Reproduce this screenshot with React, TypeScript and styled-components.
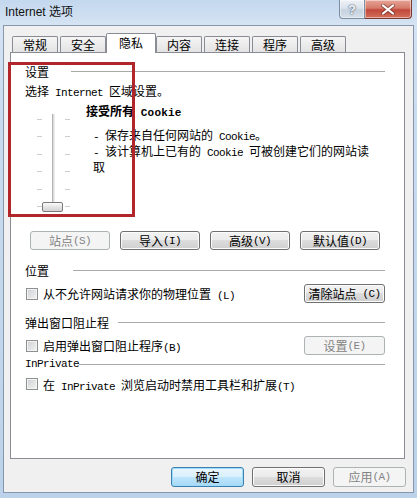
import styled, { createGlobalStyle } from "styled-components";

const GlobalStyle = createGlobalStyle`
  html, body {
    margin: 0;
    padding: 0;
  }
  body {
    font-family: "Noto Sans CJK SC", "Noto Sans", sans-serif;
    font-size: 12px;
    color: #000;
  }
`;

const Window = styled.div`
  width: 417px;
  height: 498px;
  box-sizing: border-box;
  display: flex;
  flex-direction: column;
  overflow: hidden;
  background: linear-gradient(to bottom, #c3d7ee 0, #d5e3f3 24px, #c9dbef 120px, #bcd2ea 100%);
`;

const TitleBar = styled.div`
  height: 25px;
  display: flex;
  justify-content: space-between;
  align-items: flex-start;
  flex-shrink: 0;
`;

const Title = styled.div`
  padding-left: 5px;
  line-height: 25px;
  font-family: "Liberation Sans", "Noto Sans CJK SC", sans-serif;
  font-size: 12px;
  color: #111;
`;

const CaptionButtons = styled.div`
  display: flex;
  margin-right: 5px;
`;

const CaptionButton = styled.div<{ $close?: boolean }>`
  box-sizing: border-box;
  width: ${({ $close }) => ($close ? 47 : 26)}px;
  height: 19px;
  display: flex;
  align-items: center;
  justify-content: center;
  border: 1px solid ${({ $close }) => ($close ? "#7a3a32" : "#7d8ea3")};
  border-top: none;
  border-left: ${({ $close }) => ($close ? "none" : "1px solid #7d8ea3")};
  border-radius: ${({ $close }) => ($close ? "0 0 4px 0" : "0 0 0 4px")};
  background: ${({ $close }) =>
    $close
      ? "linear-gradient(to bottom, #e6a597 0%, #d57a6a 45%, #c2473a 55%, #d2705c 100%)"
      : "linear-gradient(to bottom, #eef2f7 0%, #dbe3ec 45%, #c6d2df 55%, #d6e0ea 100%)"};
  box-shadow: inset 0 0 0 1px rgba(255, 255, 255, 0.45);
`;

const HelpGlyph = styled.span`
  font-family: "Liberation Sans", sans-serif;
  font-weight: bold;
  color: #f4f7fb;
  text-shadow: 0 0 2px #45566c, 0 0 1px #45566c;
  font-size: 13px;
`;

const Client = styled.div`
  flex: 1;
  margin: 0 3px 5px;
  border: 1px solid #8596ad;
  background: #f0f0f0;
  padding: 7px 8px 0 6px;
  display: flex;
  flex-direction: column;
`;

const TabRow = styled.div`
  display: flex;
  align-items: flex-end;
  height: 19px;
  padding-left: 2px;
  gap: 2px;
  position: relative;
  z-index: 1;
`;

const Tab = styled.div<{ $active?: boolean }>`
  box-sizing: border-box;
  width: ${({ $active }) => ($active ? 50 : 46)}px;
  height: ${({ $active }) => ($active ? 20 : 16)}px;
  margin: ${({ $active }) => ($active ? "0 -2px -1px" : "0")};
  border: 1px solid #898c95;
  border-bottom: none;
  border-radius: 2px 2px 0 0;
  background: ${({ $active }) => ($active ? "#fff" : "linear-gradient(to bottom, #f5f5f5, #e3e3e3)")};
  display: flex;
  align-items: center;
  justify-content: center;
  padding-top: ${({ $active }) => ($active ? 0 : 1)}px;
  padding-bottom: ${({ $active }) => ($active ? 2 : 0)}px;
  line-height: 14px;
`;

const Panel = styled.div`
  box-sizing: border-box;
  height: 407px;
  border: 1px solid #898c95;
  background: #fff;
  padding: 10px 19px 0 14px;
  display: flex;
  flex-direction: column;
  position: relative;
`;

const Annotation = styled.div`
  position: absolute;
  left: -3px;
  top: 9px;
  width: 127px;
  height: 155px;
  box-sizing: border-box;
  border: 3px solid #b0262a;
  pointer-events: none;
`;

const Latin = styled.span<{ $bold?: boolean }>`
  font-family: "Liberation Mono", monospace;
  font-size: 11px;
  letter-spacing: ${({ $bold }) => ($bold ? "0.2px" : "-0.6px")};
  font-weight: ${({ $bold }) => ($bold ? "bold" : "normal")};
  white-space: pre;
`;

const SectionHeader = styled.div<{ $top: number }>`
  display: flex;
  align-items: center;
  height: 16px;
  margin-top: ${({ $top }) => $top}px;
`;

const Rule = styled.div<{ $gap: number }>`
  flex: 1;
  height: 1px;
  background: #a9a9a9;
  margin-left: ${({ $gap }) => $gap}px;
`;

const TextLine = styled.div<{ $top?: number }>`
  line-height: 16px;
  margin-top: ${({ $top }) => $top ?? 0}px;
  white-space: nowrap;
`;

const SettingsBody = styled.div`
  display: flex;
  margin-top: 2px;
  height: 111px;
`;

const Slider = styled.div`
  position: relative;
  margin: 11px 0 0 12px;
  width: 33px;
  height: 98px;
  display: flex;
  justify-content: space-between;
`;

const TickColumn = styled.div`
  width: 5px;
  display: flex;
  flex-direction: column;
  justify-content: space-between;
  padding: 5px 0;
`;

const Tick = styled.div`
  height: 1px;
  background: #cdcdcd;
`;

const Track = styled.div`
  box-sizing: border-box;
  width: 3px;
  height: 100%;
  border-left: 1px solid #b4b4b4;
  border-right: 1px solid #ededed;
  background: #dcdcdc;
`;

const Thumb = styled.div`
  position: absolute;
  left: 5px;
  top: 88px;
  width: 21px;
  height: 10px;
  box-sizing: border-box;
  border: 1px solid #7a7a7a;
  border-radius: 2px;
  background: linear-gradient(to bottom, #fbfbfb, #e4e4e4 50%, #d2d2d2);
`;

const Description = styled.div`
  margin-left: 16px;
  display: flex;
  flex-direction: column;
`;

const DescTitle = styled.div`
  font-weight: bold;
  line-height: 16px;
  white-space: nowrap;
`;

const DescLines = styled.div`
  margin-top: 7px;
  padding-left: 7px;
  line-height: 13px;
  white-space: nowrap;
`;

const ButtonRow = styled.div`
  display: flex;
  gap: 10px;
  margin: 17px 0 0 5px;
`;

const Button = styled.button<{ $w: number; $h?: number; $primary?: boolean }>`
  box-sizing: border-box;
  width: ${({ $w }) => $w}px;
  height: ${({ $h }) => $h ?? 19}px;
  padding: 0;
  font-family: "Noto Sans CJK SC", sans-serif;
  font-size: 12px;
  line-height: 14px;
  color: #000;
  border: 1px solid ${({ $primary }) => ($primary ? "#3c7fb1" : "#707070")};
  border-radius: 3px;
  background: ${({ $primary }) =>
    $primary
      ? "linear-gradient(to bottom, #eaf6fd 0%, #d9f0fc 49%, #bee6fd 50%, #a7d9f5 100%)"
      : "linear-gradient(to bottom, #f2f2f2 0%, #ebebeb 49%, #dddddd 50%, #cfcfcf 100%)"};
  box-shadow: inset 0 0 0 1px ${({ $primary }) => ($primary ? "#9edcfa" : "#fcfcfc")};
  display: flex;
  align-items: center;
  justify-content: center;

  &:disabled {
    border-color: #adb2b5;
    background: #f4f4f4;
    box-shadow: none;
    color: #838383;
  }
`;

const OptionRow = styled.div<{ $top: number; $h: number }>`
  display: flex;
  align-items: center;
  justify-content: space-between;
  height: ${({ $h }) => $h}px;
  margin-top: ${({ $top }) => $top}px;
`;

const CheckLabel = styled.label`
  display: flex;
  align-items: center;
  gap: 5px;
  margin-left: 1px;
  white-space: nowrap;
`;

const CheckBox = styled.span`
  box-sizing: border-box;
  width: 12px;
  height: 12px;
  border: 1px solid #8e8f8f;
  background: linear-gradient(135deg, #cdd0d4, #f3f3f3);
  box-shadow: inset 0 0 0 1px #f4f4f4;
`;

const Footer = styled.div`
  display: flex;
  justify-content: flex-end;
  gap: 8px;
  margin: 8px -1px 0 0;
`;

const CloseIcon = () => (
  <svg width="14" height="11" viewBox="0 0 14 11">
    <path d="M2 1.5 L12 9.5 M12 1.5 L2 9.5" stroke="#5a2a24" strokeWidth="4" strokeLinecap="round" opacity="0.55" />
    <path d="M2 1.5 L12 9.5 M12 1.5 L2 9.5" stroke="#fff" strokeWidth="2.2" strokeLinecap="round" />
  </svg>
);

export default function App() {
  return (
    <>
      <GlobalStyle />
      <Window>
        <TitleBar>
          <Title>Internet 选项</Title>
          <CaptionButtons>
            <CaptionButton>
              <HelpGlyph>?</HelpGlyph>
            </CaptionButton>
            <CaptionButton $close>
              <CloseIcon />
            </CaptionButton>
          </CaptionButtons>
        </TitleBar>
        <Client>
          <TabRow>
            <Tab>常规</Tab>
            <Tab>安全</Tab>
            <Tab $active>隐私</Tab>
            <Tab>内容</Tab>
            <Tab>连接</Tab>
            <Tab>程序</Tab>
            <Tab>高级</Tab>
          </TabRow>
          <Panel>
            <Annotation />
            <SectionHeader $top={0}>
              设置
              <Rule $gap={22} />
            </SectionHeader>
            <TextLine $top={4}>
              选择<Latin> Internet </Latin>区域设置。
            </TextLine>
            <SettingsBody>
              <Slider>
                <TickColumn>
                  {[0, 1, 2, 3, 4, 5].map((i) => (
                    <Tick key={i} />
                  ))}
                </TickColumn>
                <Track />
                <TickColumn>
                  {[0, 1, 2, 3, 4, 5].map((i) => (
                    <Tick key={i} />
                  ))}
                </TickColumn>
                <Thumb />
              </Slider>
              <Description>
                <DescTitle>
                  接受所有<Latin $bold> Cookie</Latin>
                </DescTitle>
                <DescLines>
                  <div>
                    <Latin>- </Latin>保存来自任何网站的<Latin> Cookie</Latin>。
                  </div>
                  <div>
                    <Latin>- </Latin>该计算机上已有的<Latin> Cookie </Latin>可被创建它们的网站读
                  </div>
                  <div>取</div>
                </DescLines>
              </Description>
            </SettingsBody>
            <ButtonRow>
              <Button $w={80} disabled>
                站点<Latin>(S)</Latin>
              </Button>
              <Button $w={80}>
                导入<Latin>(I)</Latin>
              </Button>
              <Button $w={80}>
                高级<Latin>(V)</Latin>
              </Button>
              <Button $w={80}>
                默认值<Latin>(D)</Latin>
              </Button>
            </ButtonRow>

            <SectionHeader $top={12}>
              位置
              <Rule $gap={24} />
            </SectionHeader>
            <OptionRow $top={6} $h={19}>
              <CheckLabel>
                <CheckBox />
                <span>
                  从不允许网站请求你的物理位置<Latin> (L)</Latin>
                </span>
              </CheckLabel>
              <Button $w={81}>
                清除站点<Latin> (C)</Latin>
              </Button>
            </OptionRow>

            <SectionHeader $top={11}>
              弹出窗口阻止程
              <Rule $gap={9} />
            </SectionHeader>
            <OptionRow $top={6} $h={19}>
              <CheckLabel>
                <CheckBox />
                <span>
                  启用弹出窗口阻止程序<Latin>(B)</Latin>
                </span>
              </CheckLabel>
              <Button $w={81} disabled>
                设置<Latin>(E)</Latin>
              </Button>
            </OptionRow>

            <SectionHeader $top={1}>
              <Latin>InPrivate</Latin>
              <Rule $gap={0} />
            </SectionHeader>
            <OptionRow $top={4} $h={16}>
              <CheckLabel>
                <CheckBox />
                <span>
                  在<Latin> InPrivate </Latin>浏览启动时禁用工具栏和扩展<Latin>(T)</Latin>
                </span>
              </CheckLabel>
            </OptionRow>
          </Panel>
          <Footer>
            <Button $w={73} $h={20} $primary>
              确定
            </Button>
            <Button $w={73} $h={20}>
              取消
            </Button>
            <Button $w={73} $h={20} disabled>
              应用<Latin>(A)</Latin>
            </Button>
          </Footer>
        </Client>
      </Window>
    </>
  );
}
